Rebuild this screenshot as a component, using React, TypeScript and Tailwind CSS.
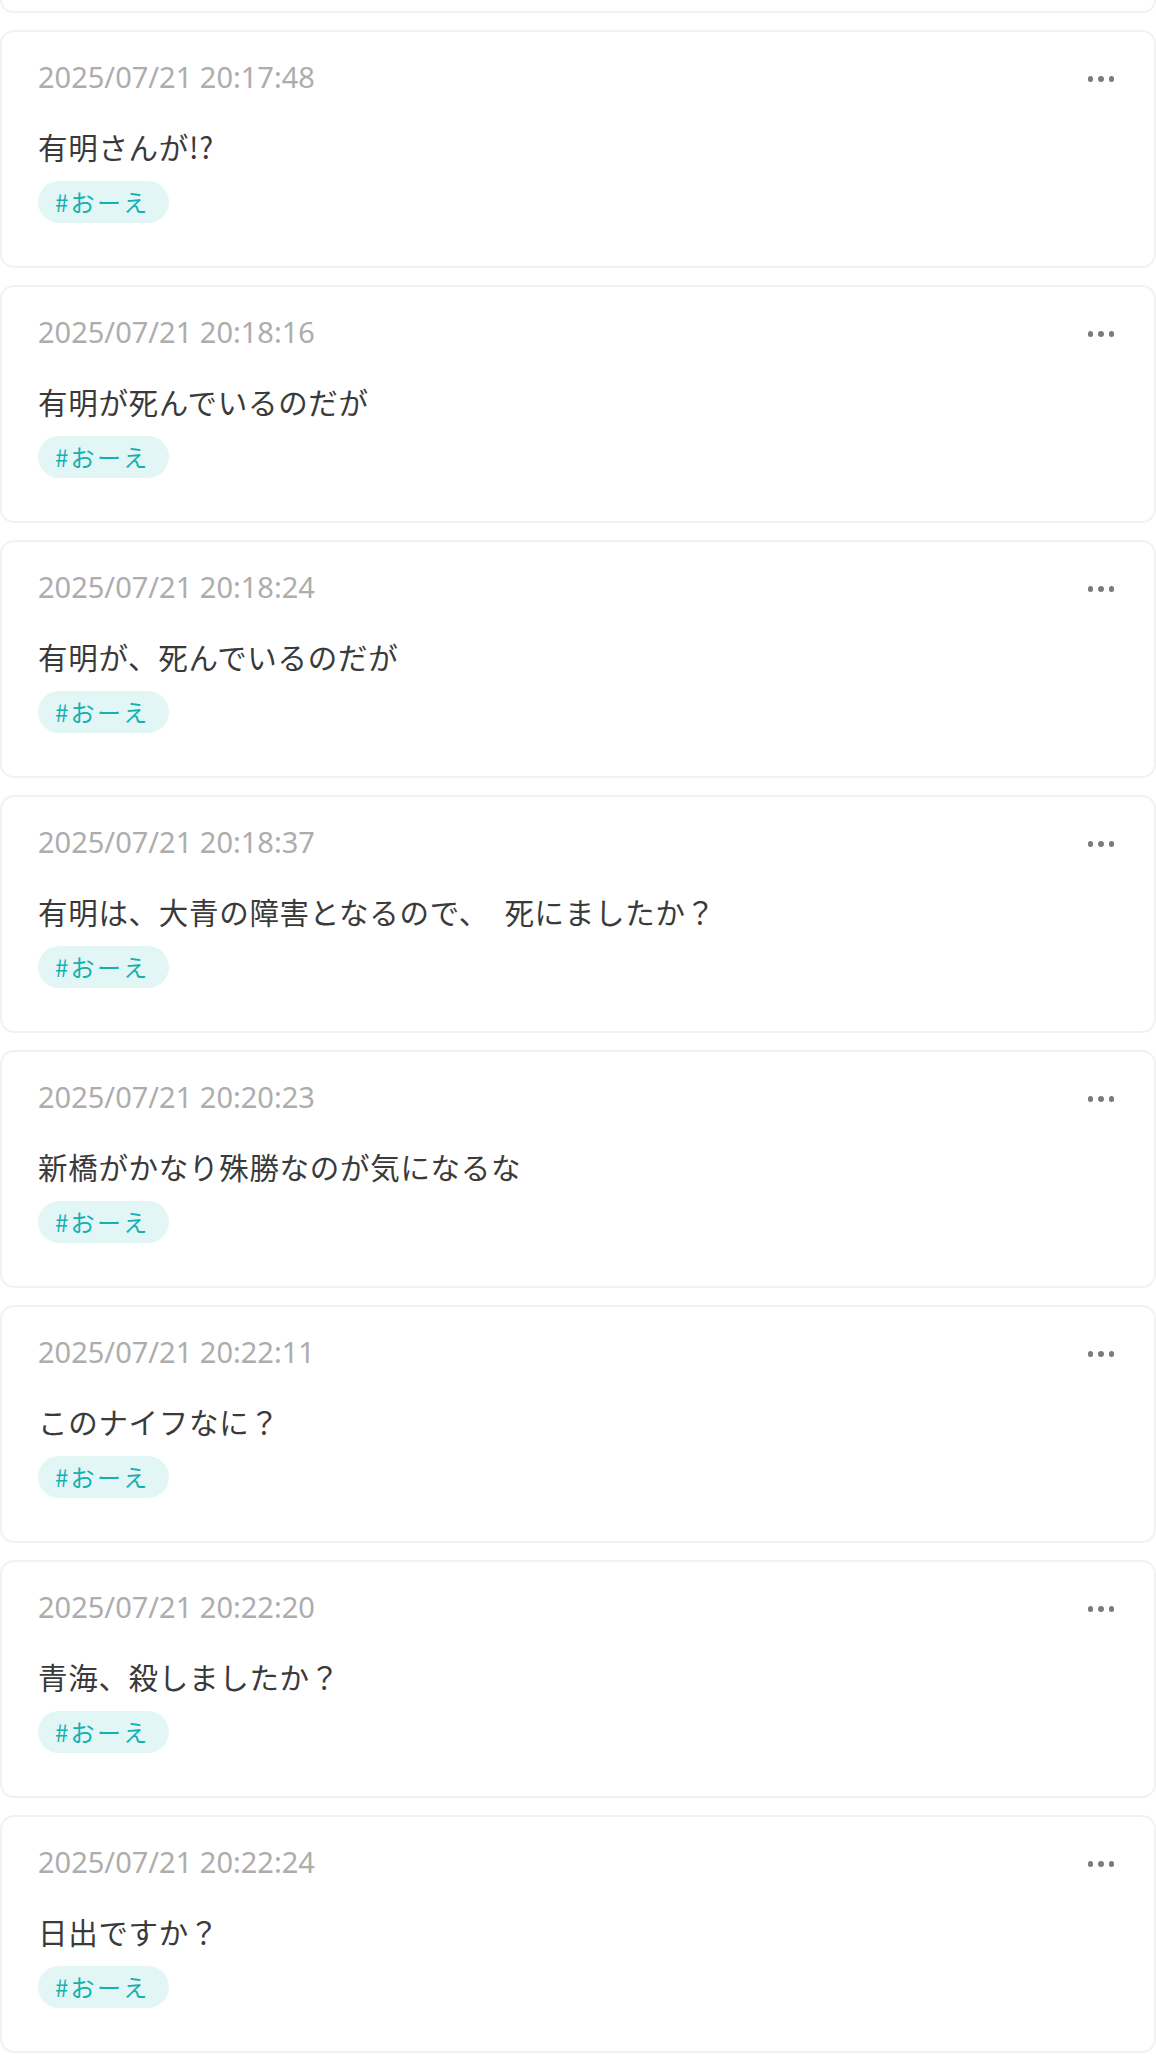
import React from "react";

const posts = [
  { time: "2025/07/21 20:17:48", text: "有明さんが!?" },
  { time: "2025/07/21 20:18:16", text: "有明が死んでいるのだが" },
  { time: "2025/07/21 20:18:24", text: "有明が、死んでいるのだが" },
  { time: "2025/07/21 20:18:37", text: "有明は、大青の障害となるので、　死にましたか？" },
  { time: "2025/07/21 20:20:23", text: "新橋がかなり殊勝なのが気になるな" },
  { time: "2025/07/21 20:22:11", text: "このナイフなに？" },
  { time: "2025/07/21 20:22:20", text: "青海、殺しましたか？" },
  { time: "2025/07/21 20:22:24", text: "日出ですか？" },
];

const MoreDots = () => (
  <button className="flex items-center gap-[5px] mr-[1px] mt-[4px] p-0">
    <span className="block w-[5.5px] h-[5.5px] rounded-full bg-[#7b7b7b]" />
    <span className="block w-[5.5px] h-[5.5px] rounded-full bg-[#7b7b7b]" />
    <span className="block w-[5.5px] h-[5.5px] rounded-full bg-[#7b7b7b]" />
  </button>
);

const PostCard = ({ time, text }: { time: string; text: string }) => (
  <div className="bg-white border-2 border-[#f2f2f2] rounded-[14px] pl-[36px] pr-[39px] pt-[30px] pb-[43px]">
    <div className="flex items-center justify-between h-[30px]">
      <span className="text-[29px] leading-[30px] text-[#adadad] font-['Noto_Sans','Noto_Sans_CJK_JP',sans-serif]">
        {time}
      </span>
      <MoreDots />
    </div>
    <p className="mt-[34px] text-[29.5px] leading-[40px] tracking-[0.7px] text-[#3a3a3a] font-['Noto_Sans_CJK_JP',sans-serif] whitespace-pre">
      {text}
    </p>
    <div className="mt-[15px] flex">
      <span className="h-[42px] flex items-center rounded-full bg-[#e3f6f6] pl-[17px] pr-[19px] text-[24px] tracking-[2.3px] text-[#15b0b0] font-['Noto_Sans_CJK_JP',sans-serif]">
        #おーえ
      </span>
    </div>
  </div>
);

export default function App() {
  return (
    <div className="bg-white min-h-[2055px] flex flex-col gap-[17px]">
      <div className="h-[13px] bg-white border-2 border-t-0 border-[#f2f2f2] rounded-b-[14px]" />
      {posts.map((p) => (
        <PostCard key={p.time} time={p.time} text={p.text} />
      ))}
    </div>
  );
}
